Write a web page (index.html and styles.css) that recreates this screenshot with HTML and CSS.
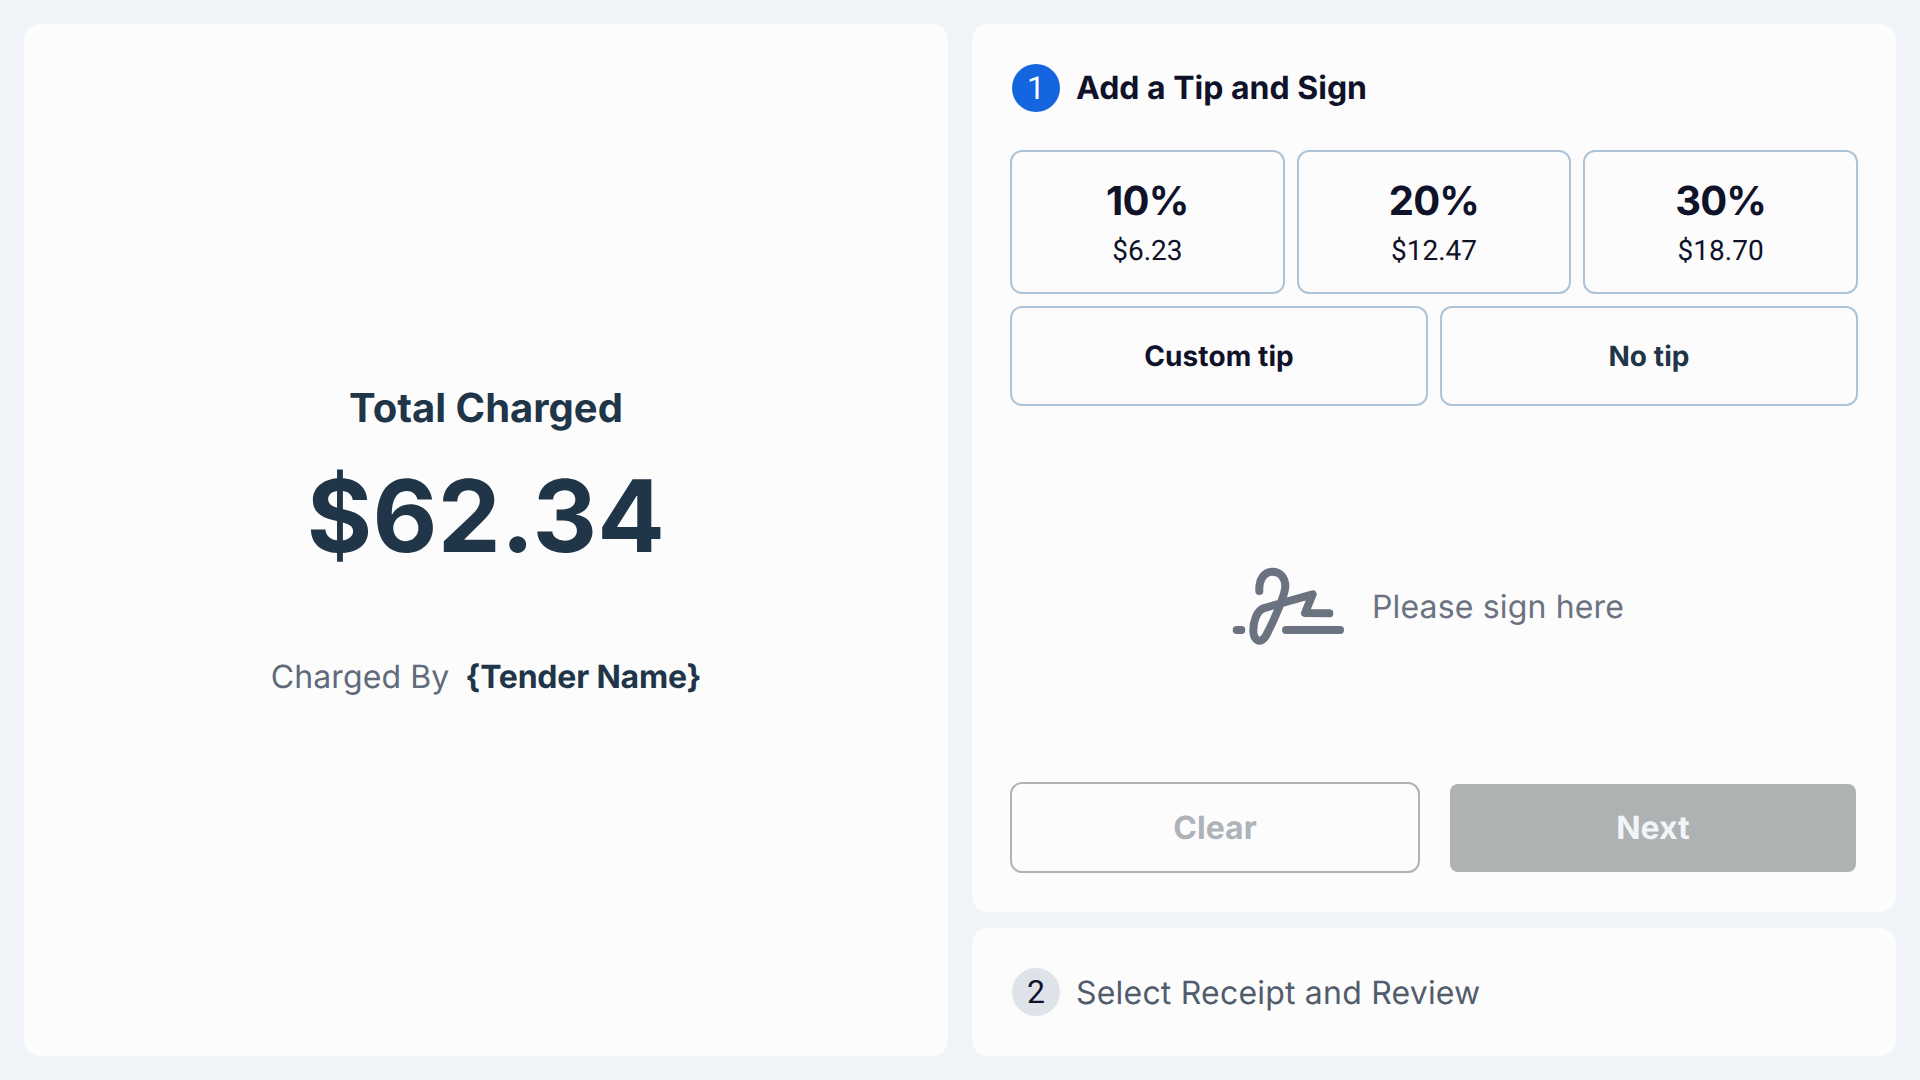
FILE: index.html
```
<!DOCTYPE html>
<html lang="en">
<head>
<meta charset="utf-8">
<title>Add a Tip and Sign</title>
<link rel="stylesheet" href="styles.css">
</head>
<body>
<main class="layout">
  <section class="card summary">
    <h2 class="summary-title">Total Charged</h2>
    <div class="summary-amount">$62.34</div>
    <p class="summary-by"><span>Charged By</span><strong>{Tender Name}</strong></p>
  </section>
  <div class="steps">
    <section class="card step-active">
      <header class="step-head">
        <span class="badge badge-active">1</span>
        <h1 class="step-title">Add a Tip and Sign</h1>
      </header>
      <div class="tips-three">
        <button class="tip"><span class="tip-pct">10%</span><span class="tip-amt">$6.23</span></button>
        <button class="tip"><span class="tip-pct">20%</span><span class="tip-amt">$12.47</span></button>
        <button class="tip"><span class="tip-pct">30%</span><span class="tip-amt">$18.70</span></button>
      </div>
      <div class="tips-two">
        <button class="tip-alt">Custom tip</button>
        <button class="tip-alt tip-alt-muted">No tip</button>
      </div>
      <div class="sign">
        <svg class="sign-icon" viewBox="66 48 336 240" width="112" height="80" fill="none" stroke="#6b7280" stroke-width="24" stroke-linecap="round" stroke-linejoin="round" aria-hidden="true">
          <path d="M148 120C146 84 164 62 187 62C212 62 226 82 226 106C226 132 190 212 168 254C152 280 130 270 130 238C130 212 140 180 160 172L308 130L285 186L358 187"/>
          <path d="M80 237L94 237"/>
          <path d="M228 237L390 237"/>
        </svg>
        <span class="sign-text">Please sign here</span>
      </div>
      <div class="actions">
        <button class="btn-clear">Clear</button>
        <button class="btn-next">Next</button>
      </div>
    </section>
    <section class="card step-next">
      <span class="badge badge-idle">2</span>
      <h2 class="step-idle-title">Select Receipt and Review</h2>
    </section>
  </div>
</main>
</body>
</html>
```

FILE: styles.css
```
* { box-sizing: border-box; }
html, body { margin: 0; height: 100%; }
body {
  background: #f0f4f8;
  font-family: Inter, "Liberation Sans", sans-serif;
  color: #0f1229;
  text-rendering: geometricPrecision;
}
button { font-family: inherit; background: none; cursor: pointer; padding: 0; text-rendering: geometricPrecision; }
h1, h2, p { margin: 0; }

.layout {
  height: 100vh;
  padding: 24px;
  display: grid;
  grid-template-columns: 924px 924px;
  column-gap: 24px;
}
.card { background: #fcfcfd; border-radius: 16px; }

.summary {
  display: flex;
  flex-direction: column;
  align-items: center;
  justify-content: center;
  color: #203648;
}
.summary-title { font-size: 40px; line-height: 48px; font-weight: 700; }
.summary-amount { font-size: 100px; line-height: 120px; font-weight: 750; letter-spacing: 0.3px; margin-top: 25px; }
.summary-by { font-size: 32px; line-height: 40px; margin-top: 80px; display: flex; gap: 16px; }
.summary-by span { color: #5f6b7a; letter-spacing: 0.1px; }
.summary-by strong { font-weight: 700; letter-spacing: -0.2px; }

.steps { display: flex; flex-direction: column; gap: 16px; }
.step-active {
  flex: 1;
  display: flex;
  flex-direction: column;
  padding: 40px 38px 39px;
}
.step-head { display: flex; align-items: center; gap: 16px; margin-left: 2px; height: 48px; }
.badge {
  width: 48px;
  height: 48px;
  border-radius: 50%;
  display: flex;
  align-items: center;
  justify-content: center;
  font-family: Roboto, sans-serif;
  font-size: 32px;
  flex: none;
}
.badge-active { background: #1565e0; color: #fcfcfd; }
.badge-idle { background: #dde3e8; color: #0f1229; }
.step-title { font-size: 32px; line-height: 40px; font-weight: 700; color: #0f1229; }

.tips-three { display: grid; grid-template-columns: repeat(3, 1fr); gap: 12px; margin-top: 38px; }
.tips-two { display: grid; grid-template-columns: repeat(2, 1fr); gap: 12px; margin-top: 12px; }
.tip, .tip-alt { border: 2px solid #aec4d6; border-radius: 12px; color: #0f1229; }
.tip { height: 144px; padding-top: 2px; display: flex; flex-direction: column; align-items: center; justify-content: center; }
.tip-pct { font-size: 40px; line-height: 48px; font-weight: 700; letter-spacing: -0.8px; }
.tip-amt { font-family: Roboto, sans-serif; font-size: 28px; line-height: 36px; margin-top: 8px; }
.tip-alt { height: 100px; font-size: 28px; font-weight: 700; letter-spacing: 0.1px; }
.tip-alt-muted { color: #203648; }

.sign { flex: 1; display: flex; align-items: center; justify-content: center; gap: 28px; padding: 26px 12px 0 0; }
.sign-icon { display: block; flex: none; }
.sign-text { font-size: 32px; color: #6b7280; position: relative; top: -1px; letter-spacing: 0.15px; }

.actions { display: flex; align-items: center; gap: 30px; padding-right: 2px; }
.btn-clear {
  width: 410px;
  height: 91px;
  border: 2px solid #aeb3b3;
  border-radius: 12px;
  font-size: 32px;
  font-weight: 700;
  color: #aeb3b8;
}
.btn-next {
  width: 406px;
  height: 88px;
  border: 0;
  border-radius: 8px;
  background: #aeb2b2;
  font-size: 32px;
  font-weight: 700;
  color: #f2f5f8;
}

.step-next { height: 128px; display: flex; align-items: center; gap: 16px; padding-left: 40px; }
.step-idle-title { font-size: 32px; font-weight: 400; color: #525c6c; letter-spacing: 0.2px; }
```
